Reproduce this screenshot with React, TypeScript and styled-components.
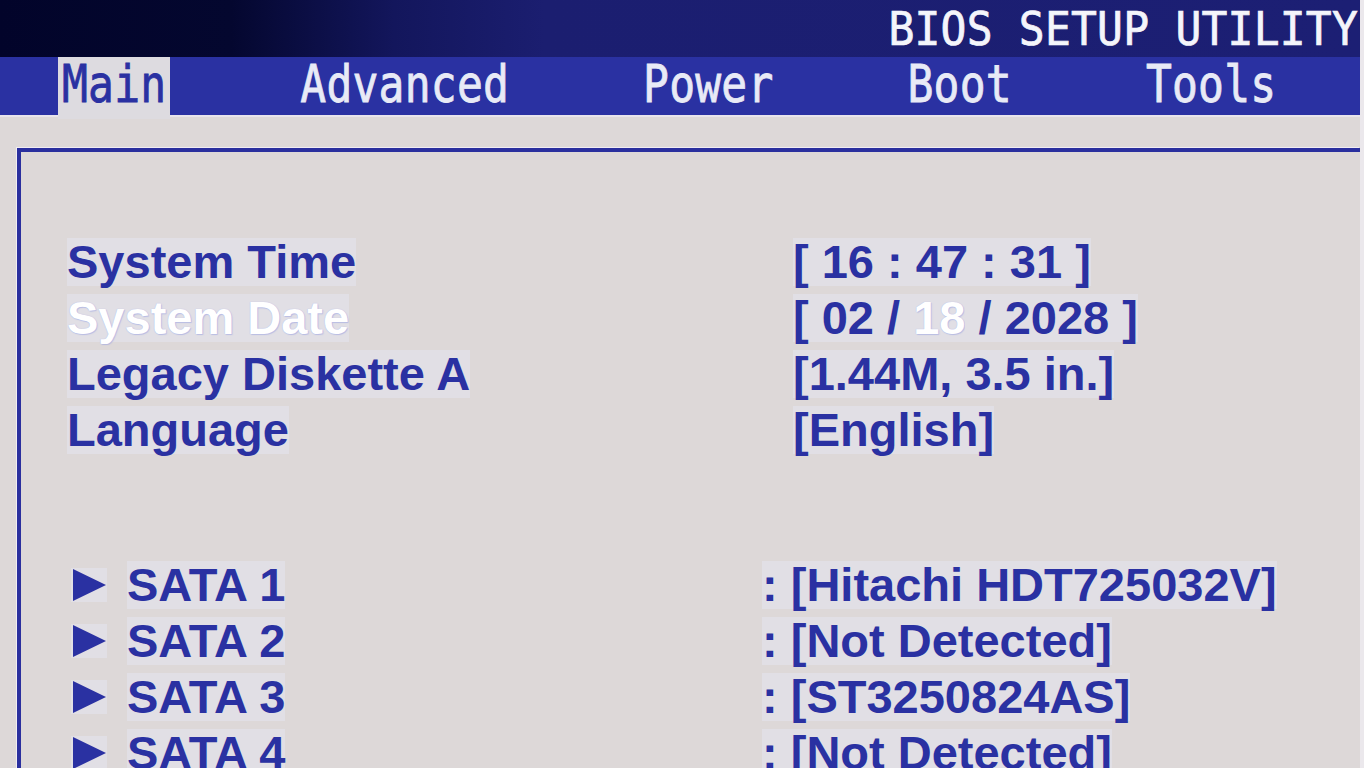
import React from 'react';
import styled, { createGlobalStyle } from 'styled-components';

const ink = '#2a31a2';
const panelBg = '#ddd8d8';

const GlobalStyle = createGlobalStyle`
  html, body {
    margin: 0;
    padding: 0;
    background: #ebe8ec;
    overflow: hidden;
  }
`;

const Screen = styled.div`
  width: 1360px;
  height: 768px;
  display: flex;
  flex-direction: column;
  background: ${panelBg};
  overflow: hidden;
`;

const TitleBar = styled.header`
  height: 57px;
  flex: none;
  display: flex;
  justify-content: flex-end;
  align-items: flex-start;
  padding: 8px 2px 0 0;
  box-sizing: border-box;
  background: linear-gradient(90deg, #02042a 0%, #04072f 17%, #13165c 29%, #1b1e70 40%, #1c1f74 100%);
`;

const PixelText = styled.span`
  font-family: 'DejaVu Sans Mono', 'Liberation Mono', monospace;
  font-size: 43px;
  line-height: 43px;
  letter-spacing: 0.2px;
  white-space: pre;
  display: inline-block;
  -webkit-text-stroke: 0.7px currentColor;
`;

const Title = styled(PixelText)`
  color: #f4f5fb;
  transform: scaleY(1.06);
`;

const TabBar = styled.nav`
  height: 58px;
  flex: none;
  display: flex;
  gap: 126px;
  padding-left: 58px;
  background: ${ink};
  border-bottom: 2px solid #e8e4ec;
`;

const Tab = styled.div<{ $active?: boolean }>`
  display: flex;
  align-items: center;
  padding: 0 4px;
  margin-bottom: ${(p) => (p.$active ? '-4px' : '0')};
  padding-bottom: ${(p) => (p.$active ? '4px' : '0')};
  background: ${(p) => (p.$active ? '#dddbe0' : 'transparent')};
  color: ${(p) => (p.$active ? ink : '#e8eaf6')};
`;

const TabLabel = styled(PixelText)`
  transform: scaleY(1.18);
  margin-top: -4px;
`;

const Body = styled.main`
  flex: 1;
  display: flex;
  padding: 31px 0 0 17px;
`;

const Panel = styled.section`
  flex: 1;
  border-top: 4px solid #2a2f9e;
  border-left: 4px solid #2a2f9e;
  box-shadow: -1px -1px 0 #f0ecf2;
  padding: 82px 0 0 46px;
  display: flex;
  flex-direction: column;
  gap: 99px;
`;

const Group = styled.div<{ $labelWidth: number }>`
  display: grid;
  grid-template-columns: ${(p) => p.$labelWidth}px auto;
  grid-auto-rows: 56px;
  align-items: center;
`;

const Cell = styled.div`
  display: flex;
  align-items: center;
  white-space: pre;
  font-family: 'Liberation Sans', Arial, sans-serif;
  font-weight: bold;
  font-size: 47px;
  line-height: 56px;
  color: ${ink};
`;

const Ink = styled.span<{ $selected?: boolean }>`
  background: #e1dfe5;
  line-height: 48px;
  color: ${(p) => (p.$selected ? '#ffffff' : ink)};
  text-shadow: ${(p) => (p.$selected ? '0 0 1px #a9aee6, 1px 1px 1px rgba(150,160,225,0.5)' : 'none')};
`;

const Arrow = styled.svg`
  width: 36px;
  height: 34px;
  margin: 0 20px 0 4px;
  background: #e1dfe5;
  flex: none;
`;

const Pointer = () => (
  <Arrow viewBox="0 0 36 34">
    <polygon points="2,1 35,17 2,33" fill={ink} />
  </Arrow>
);

const tabs = ['Main', 'Advanced', 'Power', 'Boot', 'Tools'];

const drives = [
  { name: 'SATA 1', value: 'Hitachi HDT725032V' },
  { name: 'SATA 2', value: 'Not Detected' },
  { name: 'SATA 3', value: 'ST3250824AS' },
  { name: 'SATA 4', value: 'Not Detected' },
];

const App: React.FC = () => {
  return (
    <>
      <GlobalStyle />
      <Screen>
        <TitleBar>
          <Title>BIOS SETUP UTILITY</Title>
        </TitleBar>
        <TabBar>
          {tabs.map((t, i) => (
            <Tab key={t} $active={i === 0}>
              <TabLabel>{t}</TabLabel>
            </Tab>
          ))}
        </TabBar>
        <Body>
          <Panel>
            <Group $labelWidth={726}>
              <Cell><Ink>System Time</Ink></Cell>
              <Cell><Ink>[ 16 : 47 : 31 ]</Ink></Cell>
              <Cell><Ink $selected>System Date</Ink></Cell>
              <Cell>
                <Ink>[ 02 / </Ink>
                <Ink $selected>18</Ink>
                <Ink> / 2028 ]</Ink>
              </Cell>
              <Cell><Ink>Legacy Diskette A</Ink></Cell>
              <Cell><Ink>[1.44M, 3.5 in.]</Ink></Cell>
              <Cell><Ink>Language</Ink></Cell>
              <Cell><Ink>[English]</Ink></Cell>
            </Group>
            <Group $labelWidth={695}>
              {drives.map((d) => (
                <React.Fragment key={d.name}>
                  <Cell>
                    <Pointer />
                    <Ink>{d.name}</Ink>
                  </Cell>
                  <Cell><Ink>: [{d.value}]</Ink></Cell>
                </React.Fragment>
              ))}
            </Group>
          </Panel>
        </Body>
      </Screen>
    </>
  );
};

export default App;
